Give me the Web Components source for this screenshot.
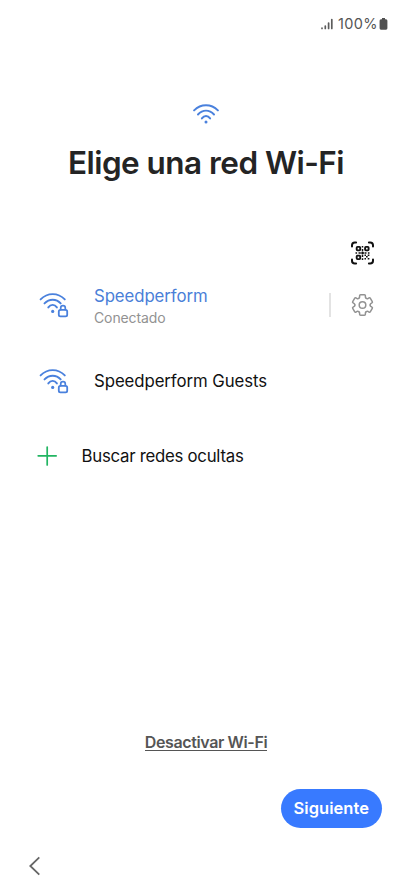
<!DOCTYPE html>
<html lang="es">
<head>
<meta charset="utf-8">
<title>Elige una red Wi-Fi</title>
<style>
html,body{margin:0;height:100%;background:#fff}
body{font-family:Inter,"Noto Sans",sans-serif;overflow:hidden}
</style>
</head>
<body>
<setup-page></setup-page>
<script>
const define = (name, html, init) => customElements.define(name, class extends HTMLElement {
  constructor() {
    super();
    const t = document.createElement('template');
    t.innerHTML = html;
    this.attachShadow({ mode: 'open' }).append(t.content.cloneNode(true));
  }
  connectedCallback() { if (init) init.call(this); }
});

// One line of text whose tracking is adjusted to span the given width.
define('fit-text', `<style>:host{display:block;white-space:nowrap;flex:none}span{display:inline-block}</style><span><slot></slot></span>`, function () {
  const s = this.shadowRoot.querySelector('span');
  const w = +this.getAttribute('width');
  s.style.letterSpacing = (w - s.getBoundingClientRect().width) / this.textContent.length + 'px';
  this.style.width = w + 'px';
});

define('status-bar', `<style>
:host{display:flex;height:47px;align-items:center;justify-content:flex-end;padding-right:24px;color:#555;font-size:14.5px;line-height:18px}
svg{display:block;flex:none}.s{margin-right:5px}.b{margin-left:1px}</style>
<svg class="s" width="12" height="12" viewBox="0 0 12 12" stroke="#5c5c5c" stroke-width="1.7" stroke-linecap="round"><path d="M1 10.2v.3M4.3 8v2.5M7.6 5v5.5M10.8 1.5v9"/></svg>
<fit-text width="40">100%</fit-text>
<svg class="b" width="9" height="12" viewBox="0 0 9 12" fill="#505050"><path d="M3 0h3v1.2h1A1.5 1.5 0 0 1 8.4 2.7v7.6A1.5 1.5 0 0 1 7 11.8H2A1.5 1.5 0 0 1 .6 10.3V2.7A1.5 1.5 0 0 1 2 1.2h1z"/></svg>`);

define('wifi-icon', `<style>:host{display:block;flex:none}svg{display:block}</style>
<svg width="26" height="20" viewBox="0 0 26 20" fill="none" stroke="#4a81dd" stroke-width="1.9" stroke-linecap="round"><path d="M1.1 6.4Q6.2 1.3 13 1.3T24.9 6.4M5 10.5Q8.5 6.6 13 6.6T21 10.5M8.9 14.4Q10.6 12 13 12T17.1 14.4"/><circle cx="13" cy="18" r="1.5" fill="#4a81dd" stroke="none"/></svg>`);

define('secure-wifi-icon', `<style>:host{display:block;flex:none}svg{display:block}</style>
<svg width="30" height="26" viewBox="-.5 -.2 30 26" fill="none" stroke="#4a81dd" stroke-width="1.9" stroke-linecap="round"><path d="M1.1 7.2Q6.2 1.9 13.2 1.9T25.3 7.2M5 11.2Q8.5 7.5 13.2 7.5T21.2 11.2M8.8 15.2Q10.6 12.7 13.2 12.7Q15.6 12.7 17.4 15.2"/><circle cx="13.2" cy="19.2" r="1.6" fill="#4a81dd" stroke="none"/><rect x="19.3" y="17.7" width="8.4" height="6.4" rx="1.6" stroke-width="1.8"/><path d="M21.2 17.4v-1.6a2.3 2.3 0 0 1 4.6 0v1.6" stroke-width="1.7"/></svg>`);

define('page-heading', `<style>:host{display:flex;flex-direction:column;align-items:center;padding-top:57px;color:#242424;font-size:31.5px;font-weight:600}
::slotted(*){line-height:40px;margin-top:18.5px}</style><wifi-icon></wifi-icon><slot></slot>`);

define('qr-button', `<style>:host{display:flex;justify-content:flex-end;padding:58px 38px 0 0}svg{display:block}</style>
<svg width="24" height="24" viewBox="-.5 0 24 24" fill="none" stroke="#111" stroke-width="2"><path stroke-linecap="round" d="M1.5 5.6V4.3A2.8 2.8 0 0 1 4.3 1.5h1.3M18.4 1.5H19.7A2.8 2.8 0 0 1 22.5 4.3v1.3M22.5 18.4V19.7a2.8 2.8 0 0 1-2.8 2.8h-1.3M5.6 22.5H4.3A2.8 2.8 0 0 1 1.5 19.7v-1.3"/><g stroke-width="1.9"><rect x="6.2" y="5.9" width="3.5" height="3.5" rx=".8"/><rect x="14.6" y="5.9" width="3.5" height="3.5" rx=".8"/><rect x="6.2" y="14.6" width="3.5" height="3.5" rx=".8"/></g><path stroke-width="1.5" d="M12 5v1.6M12 8v2.3M5 12h1.6M8 12h2.3M12 10.7v2.8M10.7 12h2.8M14 12h2M17.4 12h1.6M12 14v2M12 17.3v1.6M14 14.2h1.5M17.2 14.2h1.7M15.5 15.8h1.7M14 17.8h1.5M17.2 17.8h1.7"/></svg>`);

define('gear-icon', `<style>:host{display:block;flex:none}svg{display:block}</style>
<svg width="24" height="24" viewBox="-12.5 -12 24 24" fill="none" stroke="#929292" stroke-width="1.5" stroke-linecap="round"><defs><path id="tooth" d="M-3.85-6.67L-3.4-6.93Q-2.9-7.25-2.9-7.9V-9.2Q-2.9-10.2-1.9-10.2H1.9Q2.9-10.2 2.9-9.2V-7.9Q2.9-7.25 3.4-6.93L3.85-6.67"/></defs><use href="#tooth"/><use href="#tooth" transform="rotate(60)"/><use href="#tooth" transform="rotate(120)"/><use href="#tooth" transform="rotate(180)"/><use href="#tooth" transform="rotate(240)"/><use href="#tooth" transform="rotate(300)"/><circle r="3.3"/></svg>`);

define('network-row', `<style>:host{display:flex;align-items:center;height:75.5px;box-sizing:border-box;padding:0 38px 0 39px;font-size:16.8px;color:#111}
.t{margin-left:25px;flex:1;line-height:22px}
:host(.first) .t{padding-top:4px}
::slotted([slot=status]){font-size:14px;color:#929292}
::slotted([slot=action]){display:flex;align-items:center}</style>
<secure-wifi-icon></secure-wifi-icon><div class="t"><slot></slot><slot name="status"></slot></div><slot name="action"></slot>`);

define('network-settings', `<style>:host{display:flex;align-items:center;gap:19.5px}i{width:1.5px;height:24px;background:#e3e3e3}</style><i></i><gear-icon></gear-icon>`);

define('add-network', `<style>:host{display:flex;align-items:center;height:75px;padding-left:37px;font-size:16.8px;color:#111}svg{display:block;margin-right:24.5px}</style>
<svg width="20" height="20" viewBox="0 0 20 20" fill="none" stroke="#22b562" stroke-width="1.7" stroke-linecap="round"><path d="M10.2 1v18M1.2 9.8h18"/></svg><slot></slot>`);

define('page-footer', `<style>:host{display:flex;flex-direction:column;margin-top:auto;height:162px}
.off{align-self:center;font-size:16px;font-weight:600;color:#555;line-height:20px;height:18px;border-bottom:1px solid #555;margin-top:2px}
button{align-self:flex-end;margin:37.5px 30px 0 0;width:101.5px;height:39.5px;border:0;border-radius:20px;background:#387aff;color:#fff;font:600 16.5px Inter,sans-serif;padding:0;display:flex;align-items:center;justify-content:center}
.back{display:block;margin:27.5px 0 0 28px}</style>
<div class="off"><fit-text width="122.5">Desactivar Wi-Fi</fit-text></div>
<button><fit-text width="75.5">Siguiente</fit-text></button>
<svg class="back" width="14" height="20" viewBox="0 0 14 20" fill="none" stroke="#666" stroke-width="1.8"><path d="M11.3 1.3L2.3 10l9 8.7"/></svg>`);

define('setup-page', `<style>:host{display:flex;flex-direction:column;height:892px;width:412px;background:#fff}
network-row.first{margin-top:3px}</style>
<status-bar></status-bar>
<page-heading><fit-text width="276">Elige una red Wi-Fi</fit-text></page-heading>
<qr-button></qr-button>
<network-row class="first"><fit-text width="113.5" style="color:#4a7fd8">Speedperform</fit-text><fit-text slot="status" width="71.5">Conectado</fit-text><network-settings slot="action"></network-settings></network-row>
<network-row><fit-text width="173">Speedperform Guests</fit-text></network-row>
<add-network><fit-text width="162">Buscar redes ocultas</fit-text></add-network>
<page-footer></page-footer>`);
</script>
</body>
</html>
